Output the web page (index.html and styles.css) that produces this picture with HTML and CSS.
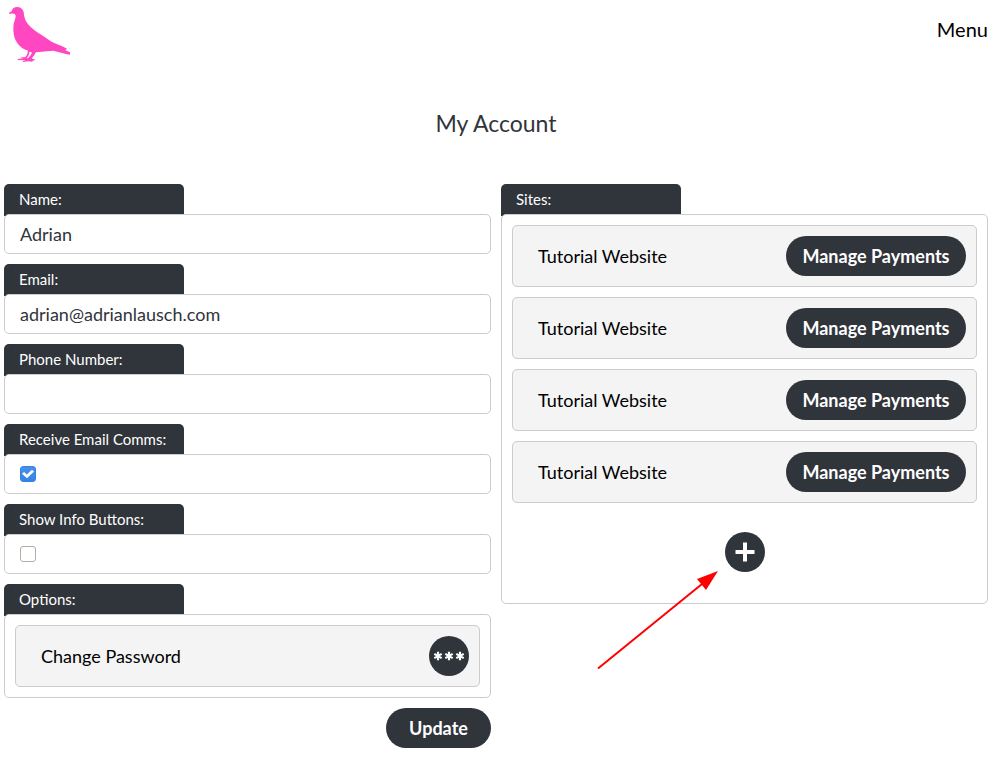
FILE: index.html
```html
<!DOCTYPE html>
<html lang="en">
<head>
<meta charset="utf-8">
<meta name="viewport" content="width=device-width, initial-scale=1">
<title>My Account</title>
<link rel="stylesheet" href="styles.css">
</head>
<body>
<header class="header">
  <a class="logo" href="#" aria-label="Home">
    <svg width="64" height="58" viewBox="24 18 192 174" aria-hidden="true">
      <path fill="#ff47c2" d="M27 42L29 37L35 34C36 26 42 21 51 21C62 21 69 27 71 36C72 50 75 61 83 71C94 85 110 96 126 106C138 113 145 120 156 126L190 140L202 147L195 150L210 157V164L198 162L160 152L108 157C105 160 104 166 98 171L96 176L104 178V181L98 182L97 185L86 184L69 186L68 183L78 181L53 180V177L70 175L60 172L74 172C80 169 84 162 83 151C65 147 51 132 44 114C40 102 39 86 41 72C43 62 47 55 47 48C46 42 41 40 33 41Z"/>
      <path fill="#fff" d="M88 156H95C95 163 92 166 88 170L84 175L80 174C85 169 88 164 88 156Z"/>
    </svg>
  </a>
  <button class="menu" type="button">Menu</button>
</header>
<main>
  <h1 class="title">My Account</h1>
  <div class="columns">
    <form class="column">
      <div class="field">
        <label class="tab" for="name">Name:</label>
        <input class="box text" id="name" type="text" value="Adrian">
      </div>
      <div class="field">
        <label class="tab" for="email">Email:</label>
        <input class="box text" id="email" type="email" value="adrian@adrianlausch.com">
      </div>
      <div class="field">
        <label class="tab" for="phone">Phone Number:</label>
        <input class="box text" id="phone" type="tel">
      </div>
      <div class="field">
        <label class="tab" for="comms">Receive Email Comms:</label>
        <div class="box toggle"><input class="check" id="comms" type="checkbox" checked></div>
      </div>
      <div class="field">
        <label class="tab" for="info">Show Info Buttons:</label>
        <div class="box toggle"><input class="check" id="info" type="checkbox"></div>
      </div>
      <section class="field">
        <h2 class="tab">Options:</h2>
        <div class="box panel">
          <div class="item">
            <span>Change Password</span>
            <button class="round" type="button" aria-label="Change password">
              <svg width="32" height="10" viewBox="0 0 32 10" aria-hidden="true">
                <g stroke="#fff" stroke-width="2.200">
                  <path d="M5 .8V9.200M1.300 2.900L8.700 7.100M1.300 7.100L8.700 2.900"/>
                  <path d="M16 .8V9.200M12.300 2.900L19.700 7.100M12.300 7.100L19.700 2.900"/>
                  <path d="M27 .8V9.200M23.300 2.900L30.700 7.100M23.300 7.100L30.700 2.900"/>
                </g>
              </svg>
            </button>
          </div>
        </div>
      </section>
      <button class="pill update" type="submit">Update</button>
    </form>
    <section class="column">
      <h2 class="tab">Sites:</h2>
      <div class="box panel">
        <div class="item"><span>Tutorial Website</span><button class="pill" type="button">Manage Payments</button></div>
        <div class="item"><span>Tutorial Website</span><button class="pill" type="button">Manage Payments</button></div>
        <div class="item"><span>Tutorial Website</span><button class="pill" type="button">Manage Payments</button></div>
        <div class="item"><span>Tutorial Website</span><button class="pill" type="button">Manage Payments</button></div>
        <div class="add">
          <button class="round" type="button" aria-label="Add site">
            <svg width="20" height="20" viewBox="0 0 20 20" aria-hidden="true"><path stroke="#fff" stroke-width="4" d="M10 .5V19.500M.5 10H19.500"/></svg>
          </button>
          <svg class="arrow" width="122" height="100" viewBox="0 0 122 100" aria-hidden="true">
            <path stroke="#f00" stroke-width="2" d="M1 98.500L105 14"/>
            <path fill="#f00" d="M121 1L100 9L109 20Z"/>
          </svg>
        </div>
      </div>
    </section>
  </div>
</main>
</body>
</html>
```
FILE: styles.css
```css
* {
  box-sizing: border-box;
}

body {
  margin: 0;
  padding: 0 17px 16px 4px;
  background: #fff;
  color: #000;
  font: 18px/24px Lato, "Liberation Sans", sans-serif;
}

button {
  padding: 0;
  border: 0;
  color: inherit;
  font: inherit;
  cursor: pointer;
}

.header {
  display: flex;
  justify-content: space-between;
  align-items: center;
  height: 58px;
}

.logo {
  margin: 12px 0 0 4px;
}

.logo svg {
  display: block;
}

.menu {
  background: none;
  font-size: 20px;
}

.title {
  margin: 49px 0 45px;
  color: #30343b;
  font-size: 23px;
  font-weight: 400;
  line-height: 32px;
  text-align: center;
}

.columns {
  display: grid;
  grid-template-columns: 1fr 1fr;
  align-items: start;
  gap: 10px;
}

.column {
  display: flex;
  flex-direction: column;
  min-width: 0;
}

.field {
  margin-bottom: 10px;
}

.tab {
  display: block;
  width: 180px;
  height: 32px;
  margin: 0 0 -2px;
  padding-left: 15px;
  border-radius: 5px 5px 0 0;
  background: #30343b;
  color: #fff;
  font-size: 15px;
  font-weight: 400;
  line-height: 30px;
}

.box {
  position: relative;
  display: block;
  width: 100%;
  border: 1px solid #ccc;
  border-radius: 5px;
  background: #fff;
}

.text {
  height: 40px;
  padding: 0 15px;
  color: #30343b;
  font: inherit;
}

.toggle {
  display: flex;
  align-items: center;
  height: 40px;
  padding: 0 15px;
}

.check {
  display: grid;
  place-items: center;
  width: 16px;
  height: 16px;
  margin: 0;
  border: 1px solid #b6aca5;
  border-radius: 3px;
  background: #fff;
  appearance: none;
}

.check:checked {
  border-color: #3584e4;
  background: linear-gradient(#4a91e8, #3584e4);
}

.check:checked::before {
  width: 12px;
  height: 9px;
  background: #fff;
  clip-path: polygon(0 48%, 17% 28%, 40% 55%, 83% 2%, 100% 22%, 42% 98%);
  content: "";
}

.panel {
  display: flex;
  flex-direction: column;
  gap: 10px;
  padding: 10px;
}

.item {
  display: flex;
  justify-content: space-between;
  align-items: center;
  padding: 10px 10px 10px 25px;
  border: 1px solid #ccc;
  border-radius: 5px;
  background: #f4f4f4;
}

.pill {
  min-width: 105px;
  height: 40px;
  padding: 0 16px;
  border-radius: 20px;
  background: #30343b;
  color: #fff;
  font-weight: 700;
}

.item .pill {
  min-width: 180px;
}

.update {
  align-self: flex-end;
}

.round {
  display: grid;
  place-items: center;
  width: 40px;
  height: 40px;
  border-radius: 50%;
  background: #30343b;
}

.add {
  position: relative;
  align-self: center;
  margin: 19px 0 21px;
}

.arrow {
  position: absolute;
  top: 38px;
  right: 46px;
}
```
